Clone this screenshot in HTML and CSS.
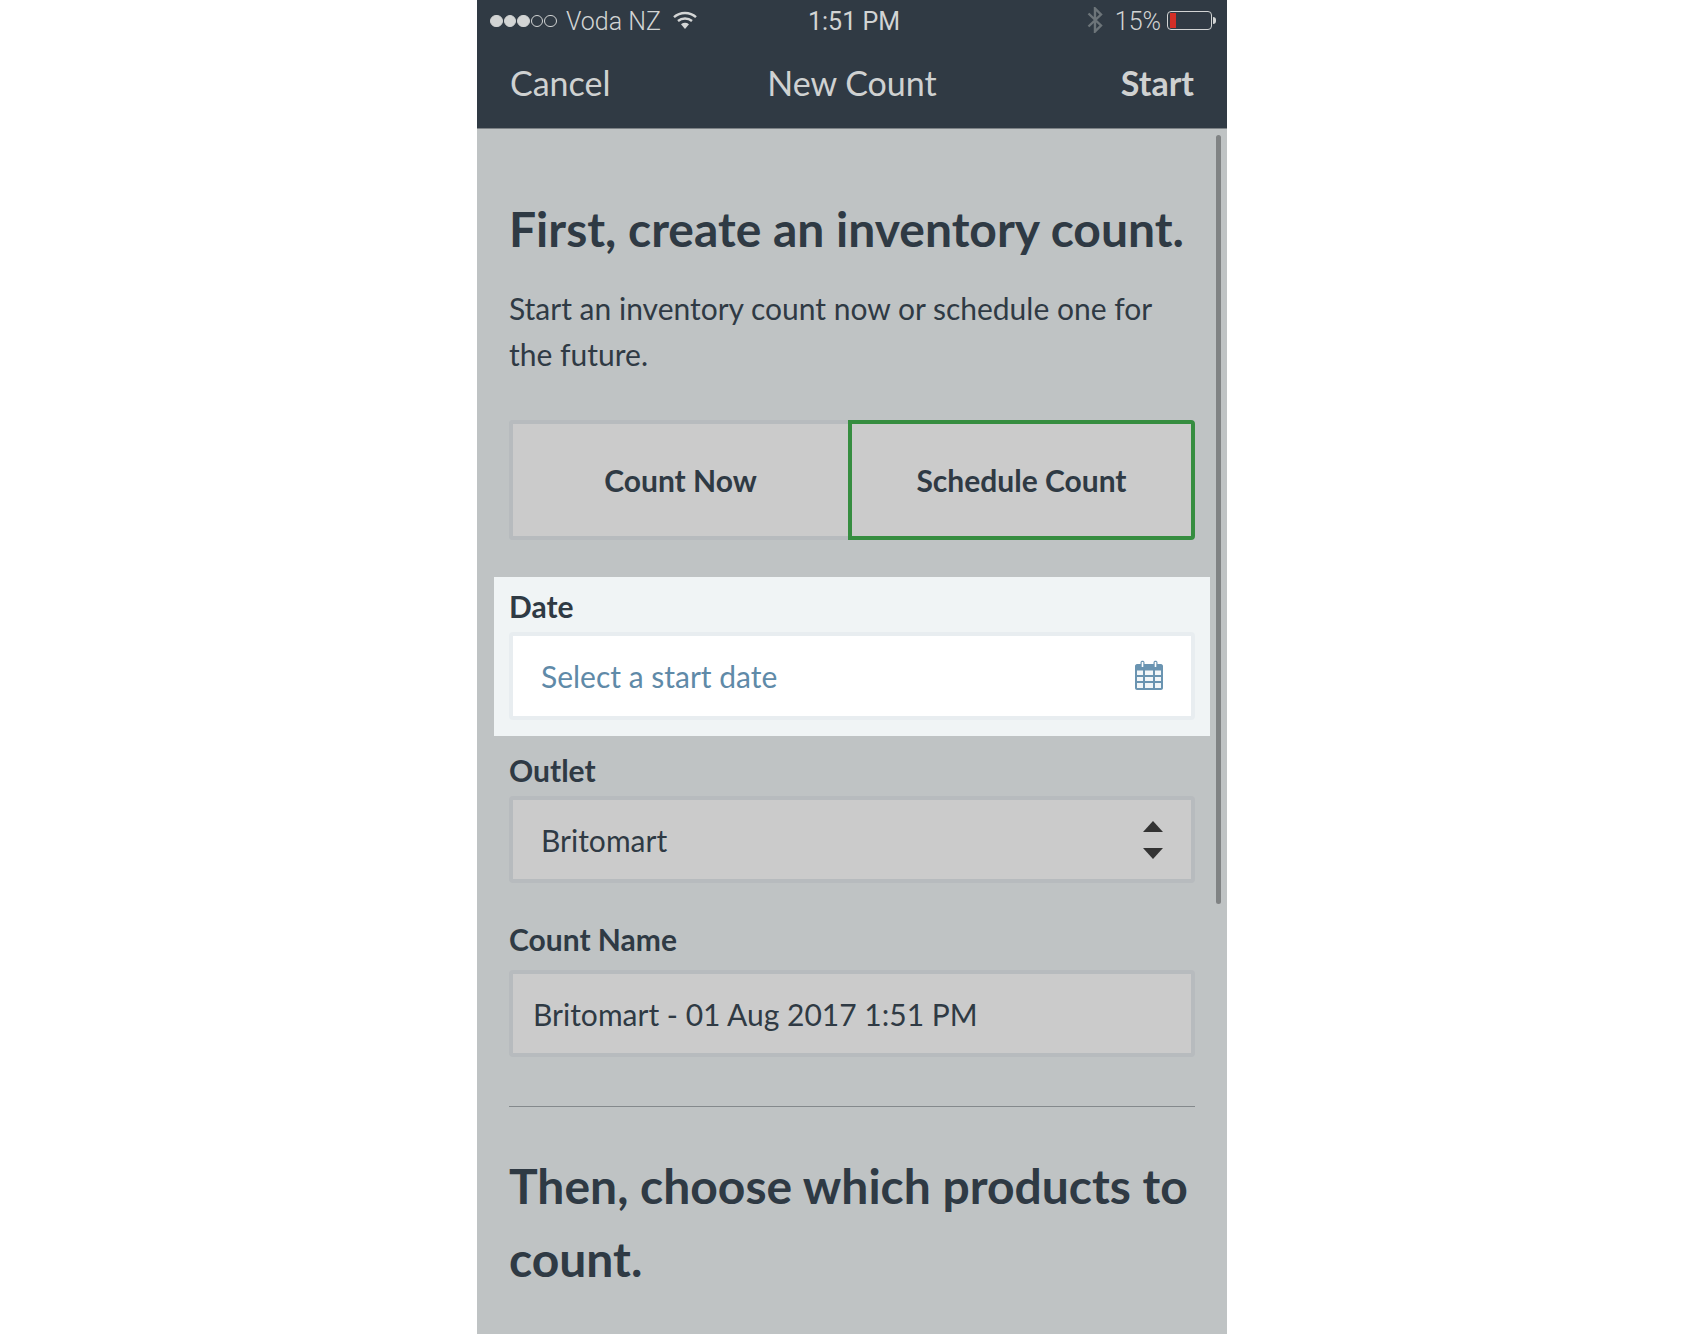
FILE: index.html
```html
<!DOCTYPE html>
<html lang="en">
<head>
    <meta charset="UTF-8">
    <title>New Count</title>
    <link rel="stylesheet" href="styles.css">
</head>
<body>
    <div class="phone">
        <div class="status-bar">
            <div class="status-left">
                <span class="signal">
                    <i class="dot on"></i><i class="dot on"></i><i class="dot on"></i><i class="dot"></i><i class="dot"></i>
                </span>
                <span>Voda NZ</span>
                <svg class="wifi" width="24" height="18" viewBox="0 0 24 18">
                    <path d="M1 6.2C7 .6 17 .6 23 6.2" fill="none" stroke="#d4d6d6" stroke-width="2.4"/>
                    <path d="M5 10C9 6.6 15 6.6 19 10" fill="none" stroke="#d4d6d6" stroke-width="2.4"/>
                    <path d="M8 13.2C10.6 11.4 13.4 11.4 16 13.2L12 18Z" fill="#d4d6d6"/>
                </svg>
            </div>
            <div class="status-time">1:51 PM</div>
            <div class="status-right">
                <svg class="bluetooth" width="16" height="26" viewBox="0 0 16 26">
                    <path d="M1.5 6.5L14 18.5L8 24.5V1.5L14 7.5L1.5 19.5" fill="none" stroke="#6c7479" stroke-width="2.4"/>
                </svg>
                <span>15%</span>
                <span class="battery"><i class="battery-level"></i></span>
                <i class="battery-tip"></i>
            </div>
        </div>

        <div class="nav-bar">
            <span class="nav-link">Cancel</span>
            <span class="nav-title">New Count</span>
            <span class="nav-link nav-start">Start</span>
        </div>

        <div class="content">
            <div class="scrollbar"></div>

            <h1>First, create an inventory count.</h1>
            <p class="intro">Start an inventory count now or schedule one for the future.</p>

            <div class="segments">
                <div class="segment">Count Now</div>
                <div class="segment selected">Schedule Count</div>
            </div>

            <div class="field highlight">
                <label>Date</label>
                <div class="input white">
                    <span class="placeholder">Select a start date</span>
                    <svg class="calendar" width="28" height="30" viewBox="0 0 28 30">
                        <path d="M2 4H5.5V2.5C5.5 0 9.5 0 9.5 2.5V4H18.5V2.5C18.5 0 22.5 0 22.5 2.5V4H26C27 4 28 5 28 6V28C28 29 27 30 26 30H2C1 30 0 29 0 28V6C0 5 1 4 2 4Z" fill="#6a94b1"/>
                        <path d="M2 10.5H8V15H2ZM10 10.5H18V15H10ZM20 10.5H26V15H20ZM2 17H8V21H2ZM10 17H18V21H10ZM20 17H26V21H20ZM2 23H8V28H2ZM10 23H18V28H10ZM20 23H26V28H20Z" fill="#f2f6f8"/>
                        <path d="M6.7 2H8.3V7H6.7ZM19.7 2H21.3V7H19.7Z" fill="#fff"/>
                    </svg>
                </div>
            </div>

            <div class="field">
                <label>Outlet</label>
                <div class="input">
                    <span>Britomart</span>
                    <span class="stepper"><i class="arrow-up"></i><i class="arrow-down"></i></span>
                </div>
            </div>

            <div class="field name-field">
                <label>Count Name</label>
                <div class="input name-input">
                    <span>Britomart - 01 Aug 2017 1:51 PM</span>
                </div>
            </div>

            <hr>

            <h1 class="second">Then, choose which products to count.</h1>
        </div>
    </div>
</body>
</html>
```

FILE: styles.css
```css
* {
    box-sizing: border-box;
}
html, body {
    height: 100%;
}
body {
    margin: 0;
    background-color: #fff;
    font-family: Lato, sans-serif;
    color: #2f3a44;
    overflow: hidden;
}
i {
    display: block;
}
.phone {
    width: 750px;
    height: 1334px;
    margin-left: 477px;
    background-color: #bfc3c4;
    overflow: hidden;
}

/* status bar */
.status-bar {
    height: 40px;
    padding: 2px 11px 0 13px;
    background-color: #303a44;
    color: #d2d4d4;
    font-family: Roboto, sans-serif;
    font-size: 25px;
    font-weight: 300;
    display: grid;
    grid-template-columns: 1fr auto 1fr;
    align-items: center;
}
.status-left, .status-right {
    display: flex;
    align-items: center;
}
.status-left {
    gap: 9px;
}
.status-right {
    justify-content: flex-end;
}
.signal {
    display: flex;
    gap: 1px;
}
.dot {
    width: 12.6px;
    height: 12.6px;
    border-radius: 50%;
    border: 1px solid #d2d4d4;
}
.dot.on {
    background-color: #d2d4d4;
}
.wifi {
    margin-left: 3px;
    margin-top: -2px;
}
.status-time {
    margin-left: 2px;
    font-weight: 400;
}
.bluetooth {
    margin-right: 12px;
    margin-top: -2px;
}
.battery {
    display: block;
    width: 45px;
    height: 19px;
    margin-left: 6px;
    margin-top: -2px;
    padding: 1px 2px;
    border: 1px solid #d2d4d4;
    border-radius: 4px;
}
.battery-level {
    width: 6px;
    height: 15px;
    background-color: #d22f27;
}
.battery-tip {
    width: 3px;
    height: 7px;
    margin-left: 1px;
    margin-top: -2px;
    background-color: #d2d4d4;
    border-radius: 0 3px 3px 0;
}

/* nav */
.nav-bar {
    height: 89px;
    padding: 0 33px 3px;
    background-color: #303a44;
    border-bottom: 1px solid #7d8286;
    color: #cfd1d1;
    font-size: 34px;
    display: grid;
    grid-template-columns: 1fr auto 1fr;
    align-items: center;
}
.nav-start {
    text-align: right;
    font-weight: 700;
}

/* content */
.content {
    position: relative;
    padding: 63px 32px 0;
}
.scrollbar {
    position: absolute;
    top: 6px;
    right: 6px;
    width: 5px;
    height: 769px;
    border-radius: 3px;
    background-color: #808384;
}
h1 {
    margin: 0;
    font-size: 48px;
    font-weight: 700;
    line-height: 74px;
    color: #2f3a44;
}
.intro {
    margin: 19px 0 0;
    font-size: 30px;
    line-height: 46px;
}
.segments {
    display: flex;
    height: 120px;
    margin-top: 43px;
    font-size: 30px;
    font-weight: 700;
}
.segment {
    flex: 0 0 339px;
    background-color: #cbcbcb;
    border: 4px solid #b7bbbe;
    border-right: none;
    border-radius: 4px 0 0 4px;
    display: flex;
    align-items: center;
    justify-content: center;
}
.segment.selected {
    flex: 1;
    border: 4px solid #368d40;
    border-radius: 0 4px 4px 0;
}
.field label {
    display: block;
    padding-top: 14px;
    font-size: 30px;
    font-weight: 700;
    line-height: 40px;
}
.highlight {
    margin: 37px -15px 0;
    padding: 0 15px 16px;
    height: 159px;
    background-color: #f0f4f5;
}
.highlight label {
    padding-top: 9px;
}
.input {
    height: 87px;
    margin-top: 6px;
    padding: 0 28px;
    background-color: #cbcbcb;
    border: 4px solid #b7bbbe;
    border-radius: 4px;
    font-size: 30px;
    display: flex;
    align-items: center;
    justify-content: space-between;
}
.input.white {
    height: 88px;
    background-color: #fff;
    border-color: #e8edf0;
}
.placeholder {
    color: #5f8aa8;
}
.calendar {
    margin-top: -3px;
}
.stepper {
    display: flex;
    flex-direction: column;
    gap: 16px;
}
.arrow-up, .arrow-down {
    width: 0;
    height: 0;
    border-left: 10px solid transparent;
    border-right: 10px solid transparent;
}
.arrow-up {
    border-bottom: 11px solid #333;
}
.arrow-down {
    border-top: 11px solid #333;
}
.name-field {
    margin-top: 22px;
}
.name-input {
    margin-top: 11px;
    padding-left: 20px;
}
hr {
    margin: 49px 0 0;
    border: none;
    border-top: 1px solid #84898c;
}
.second {
    margin-top: 42px;
    line-height: 73px;
}
```
